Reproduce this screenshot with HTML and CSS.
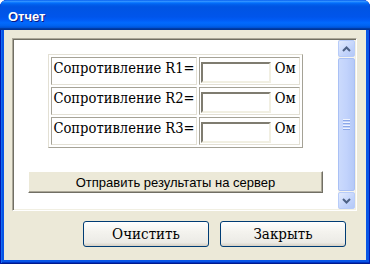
FILE: index.html
```html
<!DOCTYPE html>
<html lang="ru">
<head>
<meta charset="UTF-8">
<title>Отчет</title>
<link rel="stylesheet" href="styles.css">
</head>
<body>

<div class="window">
  <div class="titlebar"><span>Отчет</span></div>
  <div class="client">
    <div class="panel">
      <div class="content">
        <table class="form">
          <tr>
            <td class="label">Сопротивление R1=</td>
            <td class="field"><input type="text"> Ом</td>
          </tr>
          <tr>
            <td class="label">Сопротивление R2=</td>
            <td class="field"><input type="text"> Ом</td>
          </tr>
          <tr>
            <td class="label">Сопротивление R3=</td>
            <td class="field"><input type="text"> Ом</td>
          </tr>
        </table>
        <button class="send">Отправить результаты на сервер</button>
      </div>
      <div class="scrollbar">
        <div class="sb-btn">
          <svg width="9" height="6" viewBox="0 0 9 6"><path d="M1 5 L4.5 1.5 L8 5" fill="none" stroke="#4d6185" stroke-width="2"/></svg>
        </div>
        <div class="thumb">
          <div class="grip"><i></i><i></i><i></i><i></i></div>
        </div>
        <div class="sb-btn">
          <svg width="9" height="6" viewBox="0 0 9 6"><path d="M1 1 L4.5 4.5 L8 1" fill="none" stroke="#4d6185" stroke-width="2"/></svg>
        </div>
      </div>
    </div>
    <div class="actions">
      <button class="xp-btn">Очистить</button>
      <button class="xp-btn">Закрыть</button>
    </div>
  </div>
</div>

</body>
</html>
```

FILE: styles.css
```css
body {
  margin: 0;
  background: #fff;
  font-family: 'DejaVu Serif Condensed', 'DejaVu Serif', serif;
  font-stretch: condensed;
}
.window {
  width: 370px;
  height: 264px;
  display: flex;
  flex-direction: column;
  box-sizing: border-box;
  padding: 0 4px 4px;
  background: #0855e6;
  border-radius: 7px 7px 0 0;
  box-shadow: inset 1px 0 #0019b0, inset -1px 0 #0019b0, inset 0 -1px #001a8c, inset 2px 0 #166cf0, inset 0 -2px #0033c4;
}
.titlebar {
  height: 30px;
  margin: 0 -4px;
  border-radius: 7px 7px 0 0;
  background: linear-gradient(to bottom, #0058ee 0%, #3593ff 4%, #288eff 6%, #127dff 8%, #036ffc 10%, #0262ee 14%, #0057e5 20%, #0054e3 24%, #0055eb 56%, #005bf5 66%, #026afe 76%, #0062ef 86%, #0052d6 92%, #0040ab 94%, #003092 100%);
  display: flex;
  align-items: center;
  padding: 0 8px;
}
.titlebar span {
  color: #fff;
  font-family: 'Liberation Sans', sans-serif;
  font-weight: bold;
  font-size: 13px;
  text-shadow: 1px 1px #0a1883;
  margin-top: 2px;
}
.client {
  flex: 1;
  background: #ece9d8;
  padding: 8px 9px 13px 8px;
  display: flex;
  flex-direction: column;
}
.panel {
  height: 173px;
  box-sizing: border-box;
  display: flex;
  background: #fff;
  border: 1px solid;
  border-color: #aca899 #fff #fff #aca899;
  box-shadow: inset 1px 1px #716f64, inset -1px -1px #f1efe2;
  padding: 1px;
}
.content {
  flex: 1;
  padding: 0 15px 0 14px;
}
.form {
  margin: 14px auto 0;
  border-collapse: separate;
  border-spacing: 2px;
  border: 1px solid;
  border-color: #e3e0d4 #a5a296 #a5a296 #e3e0d4;
  font-family: 'DejaVu Serif Condensed', 'DejaVu Serif', serif;
  font-stretch: condensed;
  font-size: 14.6px;
}
.form td {
  border: 1px solid;
  border-color: #a5a296 #e3e0d4 #e3e0d4 #a5a296;
  height: 24px;
  padding: 1px;
  white-space: nowrap;
  vertical-align: baseline;
}
.form .label {
  width: 139px;
}
.form .field {
  width: 97px;
}
.field input {
  width: 70px;
  height: 21px;
  box-sizing: border-box;
  border: 2px solid;
  border-color: #7f7c70 #f1efe2 #f1efe2 #7f7c70;
  font-size: 13px;
  padding: 1px 2px;
  margin: 2px 0 0;
  vertical-align: -4px;
}
.send {
  display: block;
  width: 100%;
  height: 22px;
  margin-top: 23px;
  background: #ece9d8;
  border: 1px solid;
  border-color: #fff #716f64 #716f64 #fff;
  box-shadow: inset -1px -1px #aca899;
  font-family: 'Liberation Sans', sans-serif;
  font-size: 13px;
  color: #000;
  padding: 0;
}
.scrollbar {
  width: 17px;
  display: flex;
  flex-direction: column;
  background: #f4f3ee;
}
.sb-btn {
  height: 17px;
  box-sizing: border-box;
  border: 1px solid #b8ccf9;
  border-radius: 2px;
  background: linear-gradient(135deg, #e3ebfd, #c3d4fb 60%, #b3c8f7);
  display: flex;
  align-items: center;
  justify-content: center;
}
.thumb {
  flex: 1;
  margin: 1px 0;
  border: 1px solid #a9c0f5;
  border-radius: 2px;
  background: linear-gradient(to right, #cbdafc, #c2d3fc 50%, #b5c9f7);
  display: flex;
  align-items: center;
  justify-content: center;
}
.grip {
  display: flex;
  flex-direction: column;
  gap: 1px;
}
.grip i {
  display: block;
  width: 7px;
  height: 1px;
  background: #eef3fe;
  border-bottom: 1px solid #8ca8e8;
}
.actions {
  display: flex;
  justify-content: flex-end;
  gap: 11px;
  margin-top: 10px;
  padding-right: 11px;
}
.xp-btn {
  width: 126px;
  height: 26px;
  border: 1px solid #003c74;
  border-radius: 3px;
  background: linear-gradient(to bottom, #fff, #f4f3ee 40%, #ecebe6 85%, #d6d0c5);
  font-family: 'DejaVu Serif Condensed', 'DejaVu Serif', serif;
  font-stretch: condensed;
  font-size: 15px;
  color: #000;
  padding: 0;
}
```
